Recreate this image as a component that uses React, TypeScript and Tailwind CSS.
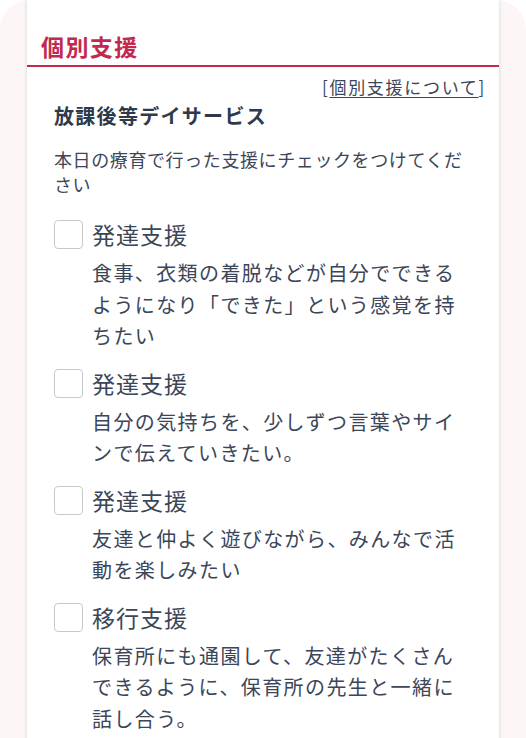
import React from 'react';

const items = [
  {
    id: 1,
    title: '発達支援',
    body: '食事、衣類の着脱などが自分でできるようになり「できた」という感覚を持ちたい'
  },
  {
    id: 2,
    title: '発達支援',
    body: '自分の気持ちを、少しずつ言葉やサインで伝えていきたい。'
  },
  {
    id: 3,
    title: '発達支援',
    body: '友達と仲よく遊びながら、みんなで活動を楽しみたい'
  },
  {
    id: 4,
    title: '移行支援',
    body: '保育所にも通園して、友達がたくさんできるように、保育所の先生と一緒に話し合う。'
  }
];

const SupportItem: React.FC<{ title: string; body: string }> = ({ title, body }) => {
  return (
    <div>
      <label className="flex items-center gap-[9px] h-[29px]">
        <span className="w-[29px] h-[29px] rounded-[4px] border border-[#c9c9cc] bg-white shrink-0" />
        <span className="text-[23px] leading-[29px] tracking-[1px] text-[#3b4658]">{title}</span>
      </label>
      <p className="mt-[8px] pl-[38px] text-[20px] leading-[31.5px] tracking-[1.4px] text-[#3b4658]">
        {body}
      </p>
    </div>
  );
};

export default function App() {
  return (
    <div
      className="min-h-screen bg-white"
      style={{ fontFamily: '"Noto Sans CJK JP", "Noto Sans", sans-serif' }}
    >
      <div className="min-h-[738px] bg-[#fdf6f6] rounded-t-[30px] px-[27px]">
        <div className="bg-white shadow-[0_0_4px_rgba(0,0,0,0.14)] min-h-[738px] pb-[20px]">
          <div className="pt-[30px] pb-[3px] px-[14px] border-b-2 border-[#c1294f]">
            <h2 className="text-[23px] leading-[32px] font-bold tracking-[1.4px] text-[#c1294f]">
              個別支援
            </h2>
          </div>

          <div className="flex justify-end pr-[13px] mt-[8px]">
            <a href="#" className="text-[17px] leading-[24px] tracking-[1.7px] text-[#3b4658]">
              [<span className="underline underline-offset-[3px]">個別支援について</span>]
            </a>
          </div>

          <div className="px-[27px]">
            <h3 className="mt-[3px] text-[20px] leading-[28px] font-bold tracking-[1.3px] text-[#2e3a4b]">
              放課後等デイサービス
            </h3>
            <p className="mt-[17px] text-[18px] leading-[25px] tracking-[0.6px] text-[#3b4658]">
              本日の療育で行った支援にチェックをつけてください
            </p>

            <div className="mt-[23px] flex flex-col gap-[17px]">
              {items.map((item) => (
                <SupportItem key={item.id} title={item.title} body={item.body} />
              ))}
            </div>
          </div>
        </div>
      </div>
    </div>
  );
}
